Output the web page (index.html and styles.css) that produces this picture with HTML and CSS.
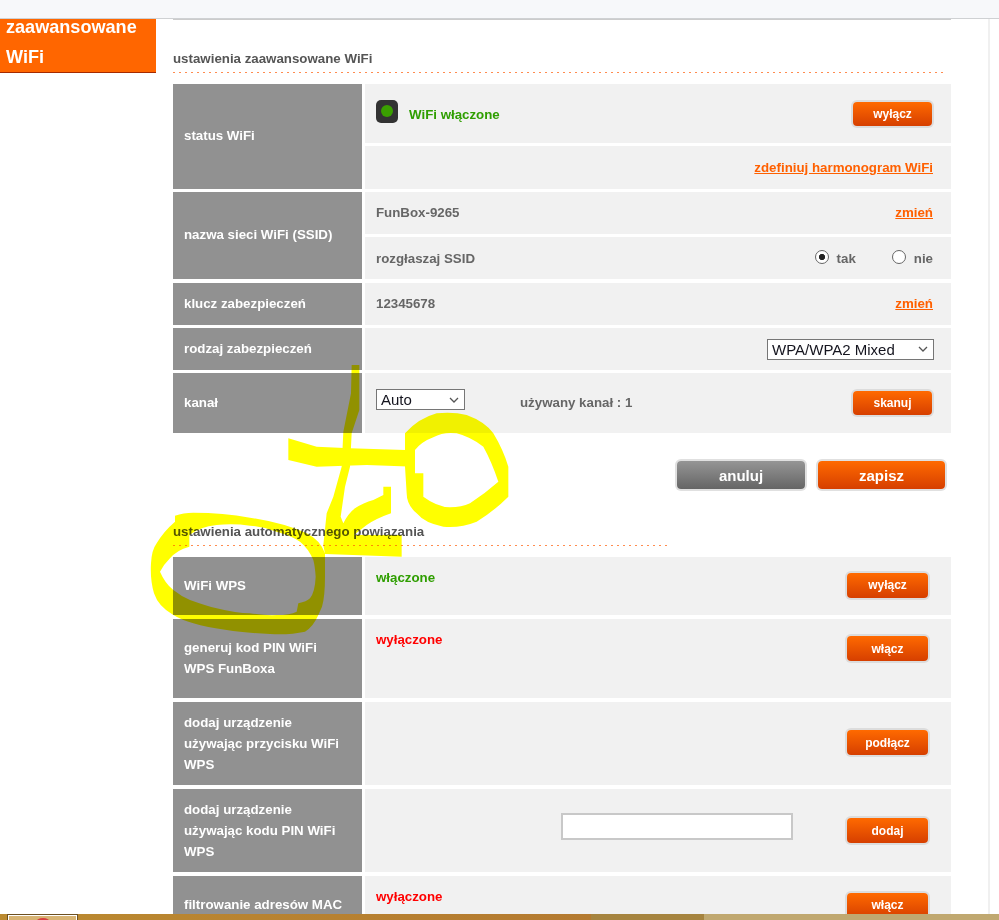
FILE: index.html
```html
<!DOCTYPE html>
<html lang="pl">
<head>
<meta charset="utf-8">
<title>ustawienia zaawansowane WiFi</title>
<link rel="stylesheet" href="styles.css">
</head>
<body>
<div class="topbar"></div>
<div class="main">
  <aside class="sidebar">
    <div class="side-item"><div class="side-line">zaawansowane</div><div class="side-line side-second">WiFi</div></div>
  </aside>
  <div class="content">
    <h2 class="title">ustawienia zaawansowane WiFi</h2>
    <div class="table">
      <div class="row h105">
        <div class="label">status WiFi</div>
        <div class="cells">
          <div class="cell grow">
            <span class="led"><span class="led-dot"></span></span>
            <span class="on led-text">WiFi włączone</span>
            <button class="btn push">wyłącz</button>
          </div>
          <div class="cell h43"><a class="link push" href="#">zdefiniuj harmonogram WiFi</a></div>
        </div>
      </div>
      <div class="row h87">
        <div class="label">nazwa sieci WiFi (SSID)</div>
        <div class="cells">
          <div class="cell grow"><span class="txt">FunBox-9265</span><a class="link txt push" href="#">zmień</a></div>
          <div class="cell grow">
            <span>rozgłaszaj SSID</span>
            <label class="radio push"><input type="radio" name="ssid" checked>tak</label>
            <label class="radio radio-last"><input type="radio" name="ssid">nie</label>
          </div>
        </div>
      </div>
      <div class="row h42 gap4">
        <div class="label">klucz zabezpieczeń</div>
        <div class="cell"><span class="txt">12345678</span><a class="link txt push" href="#">zmień</a></div>
      </div>
      <div class="row h42">
        <div class="label">rodzaj zabezpieczeń</div>
        <div class="cell"><select class="select select-wide push"><option>WPA/WPA2 Mixed</option></select></div>
      </div>
      <div class="row h60">
        <div class="label">kanał</div>
        <div class="cell">
          <select class="select select-auto"><option>Auto</option></select>
          <span class="channel txt">używany kanał : 1</span>
          <button class="btn push">skanuj</button>
        </div>
      </div>
    </div>
    <div class="actions">
      <button class="btn-big grey">anuluj</button>
      <button class="btn-big btn-save">zapisz</button>
    </div>
    <h2 class="title title-short">ustawienia automatycznego powiązania</h2>
    <div class="table">
      <div class="row h58">
        <div class="label">WiFi WPS</div>
        <div class="cell"><span class="on state">włączone</span><button class="btn btn-wps btn-up push">wyłącz</button></div>
      </div>
      <div class="row h79 gap4">
        <div class="label">generuj kod PIN WiFi<br>WPS FunBoxa</div>
        <div class="cell"><span class="off state">wyłączone</span><button class="btn btn-wps btn-top push">włącz</button></div>
      </div>
      <div class="row h83 gap4">
        <div class="label label-low">dodaj urządzenie<br>używając przycisku WiFi<br>WPS</div>
        <div class="cell"><button class="btn btn-wps btn-up push">podłącz</button></div>
      </div>
      <div class="row h83 gap4">
        <div class="label label-low">dodaj urządzenie<br>używając kodu PIN WiFi<br>WPS</div>
        <div class="cell"><input class="pin push" type="text"><button class="btn btn-wps pin-btn">dodaj</button></div>
      </div>
      <div class="row h58 gap4">
        <div class="label">filtrowanie adresów MAC</div>
        <div class="cell"><span class="off state">wyłączone</span><button class="btn btn-wps push">włącz</button></div>
      </div>
    </div>
  </div>
</div>
<div class="strip">
  <div class="seg seg-a"><div class="thumb"><span class="thumb-mark"></span></div></div>
  <div class="seg seg-b"></div>
  <div class="seg seg-c"></div>
</div>
<svg class="scribble" viewBox="0 0 1200 870" width="400" height="290" aria-hidden="true">
  <path fill="#ffff00" fill-rule="evenodd" d="M75 497Q100 488 130 488Q220 488 300 503Q400 518 470 550Q510 570 525 610L525 680Q525 740 516 770L505 795Q490 830 465 845Q420 855 360 852Q280 848 230 840Q170 832 130 820Q95 810 70 795Q25 770 12 730Q0 690 3 640Q5 600 20 580Q40 545 75 515ZM118 555L118 590Q80 600 60 625Q40 645 30 665Q45 700 70 720Q95 740 120 750Q170 768 200 775Q260 790 300 790Q350 797 380 795Q420 795 440 785L445 760Q470 755 480 745Q495 725 497 680Q495 650 490 630Q475 595 450 575Q420 555 380 545Q340 530 300 527Q250 520 200 525Q150 530 118 555Z"/>
  <path fill="#ffff00" d="M605 45L628 45L628 180L605 250L600 350L585 410L572 500L580 520Q595 490 615 475Q640 458 670 450L700 435L700 410L723 410L723 490Q680 505 650 525L612 555L755 555L755 620L525 612L520 585L530 490L550 440L575 350L580 245L603 130Z"/>
  <path fill="#ffff00" d="M415 265L500 290L600 295L765 300L795 300L795 350L650 345L500 350L415 330Z"/>
  <path fill="#ffff00" fill-rule="evenodd" d="M765 250Q805 205 860 190Q910 185 950 195Q1005 215 1030 250Q1060 300 1075 350L1075 440Q1030 485 980 515Q930 535 880 530Q825 520 800 490Q770 465 770 430L765 350ZM795 300L795 370L820 370L820 440Q860 470 900 472Q935 472 960 460Q1005 430 1045 395Q1025 335 1000 290Q960 260 920 250Q880 245 850 262Q815 275 795 300Z"/>
</svg>
</body>
</html>
```
FILE: styles.css
```css
* { box-sizing: border-box; }
html, body { margin: 0; height: 920px; overflow: hidden; background: #fff; }
body {
  position: relative;
  display: flex;
  flex-direction: column;
  font: bold 13.3px/15px "Liberation Sans", Arial, sans-serif;
  color: #666;
}
.topbar { height: 19px; flex: none; background: #f7f8fa; border-bottom: 1px solid #cfd1d3; }
.main {
  flex: 1;
  min-height: 0;
  width: 990px;
  display: flex;
  border-right: 2px solid #f0f0f0;
}
.sidebar { width: 156px; flex: none; margin-right: 17px; }
.side-item {
  display: flow-root;
  height: 54px;
  background: #ff6600;
  border-bottom: 1px solid #a52a00;
  padding: 0 0 0 6px;
  color: #fff;
  font-size: 18.1px;
  line-height: 21px;
}
.side-line { height: 21px; }
.side-line:first-child { margin-top: -2px; }
.side-second { margin-top: 9px; }
.content { width: 778px; flex: none; border-top: 1px solid #ccc; overflow: hidden; }
.title {
  margin: 0 0 11px;
  padding: 31px 0 6px;
  font-size: 13.3px;
  line-height: 16px;
  font-weight: bold;
  color: #555;
  background: linear-gradient(to right, #ff8c50 2px, transparent 2px) left bottom / 6px 1px repeat-x;
  width: 774px;
}
.title-short { width: 497px; padding-top: 33px; }
.table { display: flex; flex-direction: column; }
.row { display: grid; grid-template-columns: 189px 586px; column-gap: 3px; margin-bottom: 3px; }
.row.gap4 { margin-top: 1px; }
.h105 { height: 105px; }
.h87 { height: 87px; }
.h42 { height: 42px; }
.h60 { height: 60px; margin-bottom: 0; }
.h58 { height: 58px; }
.h79 { height: 79px; }
.h83 { height: 83px; }
.label {
  background: #919191;
  color: #fff;
  padding: 0 0 2px 11px;
  display: flex;
  align-items: center;
  line-height: 21px;
}
.label-low { padding-bottom: 0; }
.cells { display: flex; flex-direction: column; gap: 3px; }
.cell {
  background: #f1f1f1;
  display: flex;
  align-items: center;
  padding: 0 18px 0 11px;
  min-height: 0;
}
.grow { flex: 1; }
.h43 { height: 43px; flex: none; }
.push { margin-left: auto; }
.txt { margin-bottom: 2px; }
.led {
  width: 22px;
  height: 23px;
  border-radius: 5px;
  background: #333;
  display: flex;
  align-items: center;
  justify-content: center;
  margin-top: -5px;
}
.led-dot { width: 12px; height: 12px; border-radius: 50%; background: #3a9f00; }
.led-text { margin: 2px 0 0 11px; }
.on { color: #2f9e00; }
.off { color: #f00; }
.state { align-self: flex-start; margin-top: 13px; }
.link { color: #ff6000; text-decoration: underline; }
.radio { display: flex; align-items: center; color: #666; }
.radio input {
  appearance: none;
  margin: 0 8px 2px 0;
  width: 14px;
  height: 14px;
  border: 1px solid #666;
  border-radius: 50%;
  background: #fff;
}
.radio input:checked { background: radial-gradient(circle, #222 2.8px, #fff 3.4px); }
.radio-last { margin-left: 36px; }
.select {
  appearance: none;
  font: 15px "Liberation Sans", Arial, sans-serif;
  height: 21px;
  padding: 0 0 0 4px;
  color: #14141e;
  border: 1px solid #767676;
  border-radius: 0;
  background: #fff url("data:image/svg+xml,%3Csvg xmlns='http://www.w3.org/2000/svg' width='10' height='6'%3E%3Cpath d='M1 1l4 4 4-4' fill='none' stroke='%23555' stroke-width='1.3'/%3E%3C/svg%3E") no-repeat right 5px center;
}
.select-wide { width: 167px; margin-right: -1px; }
.select-auto { width: 89px; margin-top: -7px; }
.channel { margin-left: 55px; }
.btn {
  width: 79px;
  height: 24px;
  margin-right: 1px;
  padding: 0;
  border: 0;
  border-radius: 4px;
  background: linear-gradient(#ff6a00, #d63f00);
  box-shadow: 0 0 0 2px #dcdcdc;
  color: #fff;
  font: bold 12px "Liberation Sans", Arial, sans-serif;
}
.btn-wps { width: 81px; height: 25px; margin-right: 5px; }
.btn-up { margin-bottom: 2px; }
.btn-top { align-self: flex-start; margin-top: 17px; }
.pin {
  width: 232px;
  height: 27px;
  border: 2px solid #c8c8c8;
  background: #fff;
  margin-bottom: 8px;
}
.pin-btn { margin-left: 54px; }
.actions { display: flex; justify-content: flex-end; gap: 9px; padding: 26px 4px 0 0; }
.btn-big {
  width: 128px;
  height: 28px;
  margin: 2px;
  border: 0;
  padding: 0;
  border-radius: 4px;
  background: linear-gradient(#ff6a00, #d63f00);
  box-shadow: 0 0 0 2px #e0e0e0;
  color: #fff;
  font: bold 15px "Liberation Sans", Arial, sans-serif;
}
.btn-save { width: 127px; }
.grey { background: linear-gradient(#959595, #656565); }
.strip { height: 6px; flex: none; display: flex; overflow: hidden; }
.seg { height: 100%; }
.seg-a { width: 591px; background: linear-gradient(to right, #bb8a30, #b47a30); padding-left: 8px; }
.seg-b { width: 113px; background: #a6843f; }
.seg-c { flex: 1; background: #c0a870; }
.thumb {
  width: 69px;
  height: 12px;
  background: #d8b474;
  border: 1px solid #fff;
  outline: 1px solid #6e5020;
  margin-top: 1px;
  display: flex;
  justify-content: center;
}
.thumb-mark { width: 14px; height: 8px; margin-top: 2px; border-radius: 50%; background: #d84040; }
.scribble {
  position: absolute;
  left: 150px;
  top: 350px;
  mix-blend-mode: multiply;
  pointer-events: none;
}
```
